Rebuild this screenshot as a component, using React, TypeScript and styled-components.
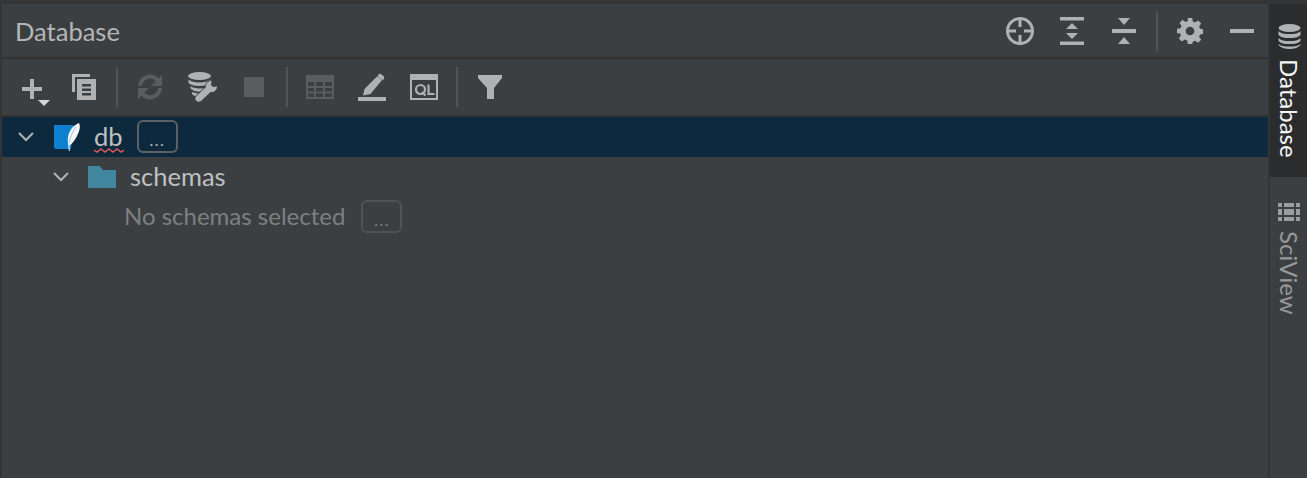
import React from "react";
import styled, { createGlobalStyle } from "styled-components";

const GlobalStyle = createGlobalStyle`
  html, body {
    margin: 0;
    padding: 0;
    background: #3c3f41;
    overflow: hidden;
  }
`;

const Window = styled.div`
  width: 1307px;
  height: 478px;
  box-sizing: border-box;
  display: flex;
  flex-direction: column;
  background: #3c3f41;
  font-family: "Lato", "Open Sans", sans-serif;
  overflow: hidden;
`;

const TopStrip = styled.div`
  height: 4px;
  flex: none;
  background: #343638;
  border-bottom: 1px solid #2f3132;
  box-sizing: border-box;
`;

const Body = styled.div`
  flex: 1;
  display: flex;
  min-height: 0;
`;

const Panel = styled.div`
  flex: 1;
  min-width: 0;
  display: flex;
  flex-direction: column;
  border-left: 2px solid #323436;
`;

const Header = styled.div`
  height: 55px;
  flex: none;
  box-sizing: border-box;
  display: flex;
  align-items: center;
  border-bottom: 2px solid #323232;
  padding-left: 13px;
`;

const Title = styled.div`
  flex: 1;
  font-size: 25.5px;
  color: #b4b6b8;
`;

const Toolbar = styled.div`
  height: 58px;
  flex: none;
  box-sizing: border-box;
  display: flex;
  align-items: center;
  border-bottom: 2px solid #323232;
  padding-left: 4px;
`;

const IconButton = styled.div`
  width: 52px;
  height: 40px;
  flex: none;
  display: flex;
  align-items: center;
  justify-content: center;
`;

const AddIcon = styled.svg`
  margin-top: 12px;
  margin-left: 10px;
`;

const WrenchIcon = styled.svg`
  margin-left: 4px;
`;

const Separator = styled.div`
  width: 2px;
  height: 40px;
  flex: none;
  margin: 0 6px;
  background: #515355;
`;

const Tree = styled.div`
  flex: 1;
  display: flex;
  flex-direction: column;
`;

const Row = styled.div<{ $selected?: boolean; $indent: number }>`
  height: 40px;
  flex: none;
  display: flex;
  align-items: center;
  padding-left: ${(p) => p.$indent}px;
  background: ${(p) => (p.$selected ? "#0d293e" : "transparent")};
`;

const Chevron = styled.svg`
  width: 16px;
  height: 10px;
  flex: none;
  margin-right: 20px;
`;

const DbIcon = styled.svg`
  flex: none;
  margin-right: 14px;
`;

const FolderIcon = styled.svg`
  flex: none;
  margin-left: -1px;
  margin-right: 14px;
`;

const NodeText = styled.span<{ $muted?: boolean }>`
  font-size: ${(p) => (p.$muted ? "24px" : "25.5px")};
  line-height: 30px;
  margin-top: -2px;
  color: ${(p) => (p.$muted ? "#7d7f81" : "#c0c0c0")};
  position: relative;
`;

const Squiggle = styled.svg`
  position: absolute;
  left: 0;
  bottom: -2px;
  width: 30px;
  height: 5px;
`;

const MoreButton = styled.div<{ $muted?: boolean; $offset: number }>`
  width: 41px;
  height: 33px;
  flex: none;
  box-sizing: border-box;
  margin-left: ${(p) => p.$offset}px;
  margin-top: -1px;
  padding-top: 5px;
  border: 2px solid ${(p) => (p.$muted ? "#505254" : "#5e6164")};
  border-radius: 6px;
  display: flex;
  align-items: center;
  justify-content: center;
  font-size: 18px;
  letter-spacing: 1px;
  color: ${(p) => (p.$muted ? "#787a7c" : "#a9abad")};
`;

const Sidebar = styled.div`
  width: 39px;
  flex: none;
  box-sizing: border-box;
  border-left: 2px solid #323436;
  display: flex;
  flex-direction: column;
`;

const SideTab = styled.div<{ $active?: boolean; $height: number; $top: number }>`
  height: ${(p) => p.$height}px;
  flex: none;
  box-sizing: border-box;
  padding-top: ${(p) => p.$top}px;
  padding-left: 1px;
  background: ${(p) => (p.$active ? "#2b2c2d" : "transparent")};
  display: flex;
  flex-direction: column;
  align-items: center;
`;

const SideLabel = styled.div<{ $active?: boolean }>`
  writing-mode: vertical-rl;
  font-size: 24px;
  line-height: 26px;
  margin-top: 10px;
  color: ${(p) => (p.$active ? "#f6f6f6" : "#96989a")};
`;

const ICON = "#afb1b3";
const DIM = "#5a5c5e";

const App: React.FC = () => {
  return (
    <Window>
      <GlobalStyle />
      <TopStrip />
      <Body>
        <Panel>
          <Header>
            <Title>Database</Title>
            <IconButton>
              <svg width="28" height="28" viewBox="0 0 28 28" fill="none">
                <circle cx="14" cy="14" r="12.5" stroke={ICON} strokeWidth="3" />
                <path d="M14 2v8M14 18v8M2 14h8M18 14h8" stroke={ICON} strokeWidth="3" />
              </svg>
            </IconButton>
            <IconButton>
              <svg width="24" height="28" viewBox="0 0 24 28" fill={ICON}>
                <path d="M0 0h24v3.500H0zM0 24.500h24V28H0z" />
                <path d="M12 6l6 6H6zM12 22l6-6H6z" />
              </svg>
            </IconButton>
            <IconButton>
              <svg width="24" height="26" viewBox="0 0 24 26" fill={ICON}>
                <path d="M0 11h24v4H0z" />
                <path d="M6 0h12l-6 7zM6 26h12l-6-7z" />
              </svg>
            </IconButton>
            <Separator />
            <IconButton>
              <svg width="26" height="26" viewBox="0 0 24 24" fill={ICON}>
                <path
                  fillRule="evenodd"
                  d="M10 0h4l.6 3.300 2.200.9L19.500 2.300l2.800 2.800-1.900 2.700.9 2.200 3.300.6v4l-3.300.6-.9 2.200 1.900 2.700-2.800 2.800-2.700-1.900-2.200.9L14 24h-4l-.6-3.300-2.200-.9-2.700 1.900-2.800-2.800 1.900-2.700-.9-2.200L0 14v-4l3.300-.6.9-2.200-1.900-2.700 2.800-2.800 2.700 1.900 2.200-.9zM12 8a4 4 0 100 8 4 4 0 000-8z"
                />
              </svg>
            </IconButton>
            <IconButton>
              <svg width="24" height="4" viewBox="0 0 24 4" fill={ICON}>
                <rect width="24" height="4" />
              </svg>
            </IconButton>
          </Header>
          <Toolbar>
            <IconButton>
              <AddIcon width="30" height="28" viewBox="0 0 30 28" fill={ICON}>
                <path d="M8 0h4v8h8v4h-8v8H8v-8H0V8h8z" />
                <path d="M16 21h12l-6 6z" fill="#d4d6d8" />
              </AddIcon>
            </IconButton>
            <IconButton>
              <svg width="24" height="26" viewBox="0 0 24 26" fill={ICON}>
                <path d="M0 0h18v3H3v15H0z" />
                <path
                  fillRule="evenodd"
                  d="M5 5h19v21H5zM10 10v2.500h9V10zM10 14.500V17h9v-2.500zM10 19v2.500h9V19z"
                />
              </svg>
            </IconButton>
            <Separator />
            <IconButton>
              <svg width="26" height="26" viewBox="0 0 26 26" fill="none" stroke={DIM} strokeWidth="4">
                <path d="M3 12a10 10 0 0 1 17-6.500L23 9" />
                <path d="M23 14a10 10 0 0 1-17 6.500L3 17" />
                <path d="M25 1v11H14z" fill={DIM} stroke="none" />
                <path d="M1 25V14h11z" fill={DIM} stroke="none" />
              </svg>
            </IconButton>
            <IconButton>
              <WrenchIcon width="32" height="30" viewBox="0 0 32 30" fill={ICON}>
                <ellipse cx="11.500" cy="4" rx="11.500" ry="4" />
                <path d="M.5 7.500c2 2 6 3 11 3s9-1 11-3V11c-2 2-6 3-11 3s-9-1-11-3z" />
                <path d="M2 14c2 1.500 5.500 2.500 9.500 2.500 2.500 0 5-.3 6.500-.8l-3 3.800c-5 .5-10-.5-12-2.500z" />
                <path d="M4 20c2 .8 4.500 1.300 7 1.500L8.500 24.500C6.500 24 5 23 4 22z" />
                <path
                  d="M23.500 9L23 13l2 2 4-.5c0 3.500-3 6-6.500 5.500L13 29c-1.500 1-3.500 1-5-.5-1-1.500-1-3 .5-4.500L18 15c-.5-3.500 2-6 5.500-6z"
                  stroke="#3c3f41"
                  strokeWidth="1.500"
                  paintOrder="stroke"
                />
              </WrenchIcon>
            </IconButton>
            <IconButton>
              <svg width="20" height="20" viewBox="0 0 20 20" fill={DIM}>
                <rect width="20" height="20" />
              </svg>
            </IconButton>
            <Separator />
            <IconButton>
              <svg width="28" height="24" viewBox="0 0 28 24" fill={DIM}>
                <path
                  fillRule="evenodd"
                  d="M0 0h28v24H0zM2 7v4h6V7zM10 7v4h7V7zM19 7v4h7V7zM2 13v3.500h6V13zM10 13v3.500h7V13zM19 13v3.500h7V13zM2 18.500V22h6v-3.500zM10 18.500V22h7v-3.500zM19 18.500V22h7v-3.500z"
                />
              </svg>
            </IconButton>
            <IconButton>
              <svg width="28" height="28" viewBox="0 0 28 28" fill={ICON}>
                <path d="M0 24h28v4H0z" />
                <path d="M19 3.500l5 3.500L12.500 21 5 22.500l1.500-6.500zM20.500 1.500c1-1 2-1 3 0l2 1.500c1 .8 1 2 .2 3l-1 1.300-5.200-3.800z" />
              </svg>
            </IconButton>
            <IconButton>
              <svg width="28" height="26" viewBox="0 0 28 26" fill="none">
                <rect x="1" y="1" width="26" height="24" stroke={ICON} strokeWidth="2" />
                <rect x="0" y="0" width="28" height="6" fill={ICON} />
                <circle cx="10.500" cy="15.500" r="4.500" stroke={ICON} strokeWidth="2.200" />
                <path d="M12 18l3.500 3.500" stroke={ICON} strokeWidth="2.200" />
                <path d="M18.500 10.500V20h6" stroke={ICON} strokeWidth="2.200" />
              </svg>
            </IconButton>
            <Separator />
            <IconButton>
              <svg width="24" height="24" viewBox="0 0 24 24" fill={ICON}>
                <path d="M0 0h24v3l-8 10v11H9V13L0 3z" />
              </svg>
            </IconButton>
          </Toolbar>
          <Tree>
            <Row $selected $indent={16}>
              <Chevron viewBox="0 0 16 10" fill="none">
                <path d="M1 1l7 7 7-7" stroke={ICON} strokeWidth="2" />
              </Chevron>
              <DbIcon width="26" height="28" viewBox="0 0 26 28">
                <path d="M0 2h19.500L17 26H2c-1 0-2-1-2-2z" fill="#0f7fd0" />
                <path
                  d="M25 0c2 4 0 9-2 13-2 4-5 8-7.500 9.500l.3 5.500h-1L14 20c-1-6 1-11 4-15 2-2.500 5-4 7-5z"
                  fill="#f4f6f8"
                />
                <path d="M22 4c-3 4-6 10-7 16" stroke="#8fb4cf" strokeWidth="0.800" fill="none" />
              </DbIcon>
              <NodeText>
                db
                <Squiggle viewBox="0 0 30 5" fill="none">
                  <path d="M0 2l3 2 4-3 4 3 4-3 4 3 4-3 4 3 3-2" stroke="#e0585c" strokeWidth="1.500" />
                </Squiggle>
              </NodeText>
              <MoreButton $offset={14}>...</MoreButton>
            </Row>
            <Row $indent={51}>
              <Chevron viewBox="0 0 16 10" fill="none">
                <path d="M1 1l7 7 7-7" stroke={ICON} strokeWidth="2" />
              </Chevron>
              <FolderIcon width="28" height="22" viewBox="0 0 28 22" fill="#41869f">
                <path d="M0 0h12l3 4h13v18H0z" />
              </FolderIcon>
              <NodeText>schemas</NodeText>
            </Row>
            <Row $indent={122}>
              <NodeText $muted>No schemas selected</NodeText>
              <MoreButton $muted $offset={16}>...</MoreButton>
            </Row>
          </Tree>
        </Panel>
        <Sidebar>
          <SideTab $active $height={173} $top={20}>
            <svg width="23" height="25" viewBox="0 0 23 25" fill="#afb1b3">
              <ellipse cx="11.500" cy="4" rx="11" ry="4" />
              <path d="M.5 7c2 2.500 6 3 11 3s9-.5 11-3v4c-2 2.500-6 3-11 3s-9-.5-11-3z" />
              <path d="M.5 14c2 2.500 6 3 11 3s9-.5 11-3v3c-2 2.500-6 3-11 3s-9-.5-11-3z" />
              <path d="M.5 20c2 2 6 2.500 11 2.500s9-.5 11-2.500v1c-2 2.500-6 4-11 4s-9-1.500-11-4z" />
            </svg>
            <SideLabel $active>Database</SideLabel>
          </SideTab>
          <SideTab $height={150} $top={26}>
            <svg width="22" height="18" viewBox="0 0 22 18" fill="#9b9d9f">
              <path d="M0 0h4v4H0zM6 0h10v4H6zM18 0h4v4h-4z" />
              <path d="M0 6h4v6H0zM6 6h10v6H6zM18 6h4v6h-4z" />
              <path d="M0 14h4v4H0zM6 14h10v4H6zM18 14h4v4h-4z" />
            </svg>
            <SideLabel>SciView</SideLabel>
          </SideTab>
        </Sidebar>
      </Body>
    </Window>
  );
};

export default App;
